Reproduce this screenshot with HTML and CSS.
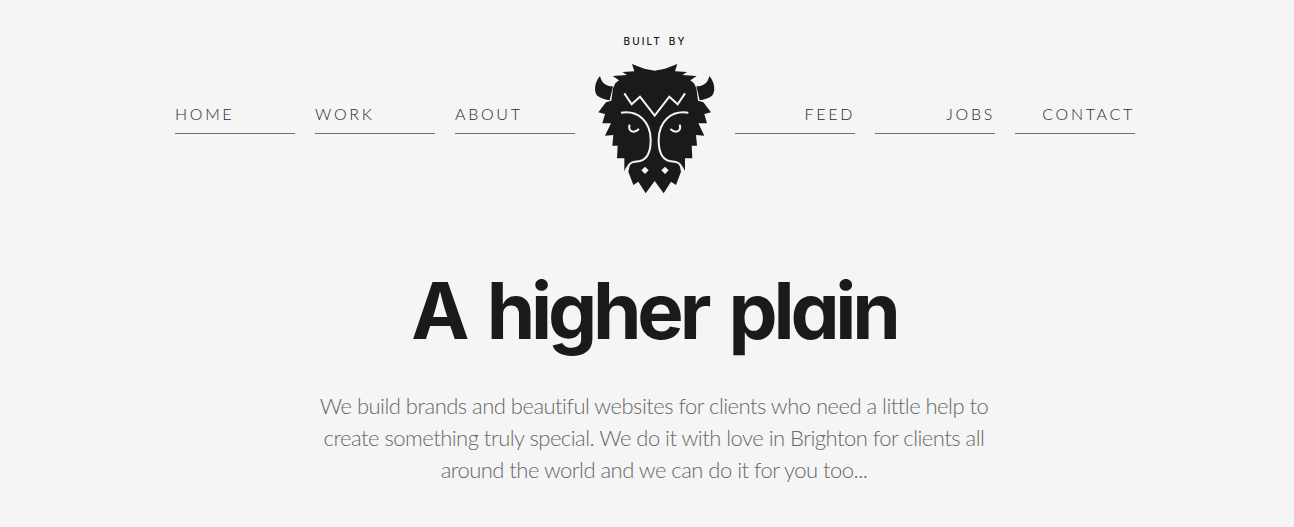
FILE: index.html
```html
<!DOCTYPE html>
<html lang="en">
<head>
<meta charset="utf-8">
<title>A higher plain</title>
<link rel="stylesheet" href="styles.css">
</head>
<body>
<header class="site-header">
  <nav class="nav-group">
    <a class="nav-link" href="#">HOME</a>
    <a class="nav-link" href="#">WORK</a>
    <a class="nav-link" href="#">ABOUT</a>
  </nav>
  <div class="brand">
    <div class="built-by">BUILT BY</div>
    <svg class="bison" viewBox="0 0 420 525" aria-label="Bison logo">
      <path class="bison-fill" d="M141 117 L178 131 L209 137 L240 131 L277 117 L270 139 L306 141 L292 150 L335 153 L316 166 L327 175 L334 190 L339 227 L355 232 L378 262 L358 267 L366 295 L340 295 L358 332 L333 330 L336 362 L320 362 L322 400 L300 400 L300 445 L283 418 L288 440 L273 480 L258 470 L236 505 L209 468 L182 505 L160 470 L145 480 L130 440 L135 418 L118 445 L118 400 L96 400 L98 362 L82 362 L85 330 L60 332 L78 295 L52 295 L60 267 L40 262 L63 232 L79 227 L84 190 L91 175 L102 166 L83 153 L126 150 L112 141 L148 139 Z"/>
      <path class="bison-fill" d="M45 153 C28 172 26 200 37 212 C47 220 62 224 74 226 L84 184 C68 184 50 178 45 153 Z"/>
      <path class="bison-fill" d="M373 153 C390 172 392 200 381 212 C371 220 356 224 344 226 L334 184 C350 184 368 178 373 153 Z"/>
      <path class="bison-line" d="M118 205 L140 238 L165 215 L209 272 L253 215 L278 238 L300 205"/>
      <path class="bison-line" d="M108 263 C160 255 197 290 197 345 C197 385 185 403 165 408 L145 411 Q132 412 118 445"/>
      <path class="bison-line" d="M310 263 C258 255 221 290 221 345 C221 385 233 403 253 408 L273 411 Q286 412 300 445"/>
      <path class="bison-line" d="M134 299 C128 318 145 328 162 312"/>
      <path class="bison-line" d="M284 299 C290 318 273 328 256 312"/>
      <path class="bison-mark" d="M180 425 L191 436 L180 447 L169 436 Z"/>
      <path class="bison-mark" d="M240 425 L251 436 L240 447 L229 436 Z"/>
    </svg>
  </div>
  <nav class="nav-group nav-group-right">
    <a class="nav-link" href="#">FEED</a>
    <a class="nav-link" href="#">JOBS</a>
    <a class="nav-link" href="#">CONTACT</a>
  </nav>
</header>
<main class="hero">
  <h1 class="hero-title">A higher plain</h1>
  <p class="hero-copy">We build brands and beautiful websites for clients who need a little help to create something truly special. We do it with love in Brighton for clients all around the world and we can do it for you too...</p>
</main>
</body>
</html>
```
FILE: styles.css
```css
* { box-sizing: border-box; }
html, body { margin: 0; }
body {
  background: #f5f5f5;
  color: #1a1a1a;
  font-family: "Lato", "Liberation Sans", sans-serif;
  height: 527px;
  overflow: hidden;
}
.site-header {
  width: 960px;
  margin: 0 0 0 175px;
  padding-top: 34px;
  display: flex;
  align-items: flex-start;
}
.nav-group {
  display: flex;
  gap: 20px;
  padding-top: 70px;
}
.nav-link {
  display: block;
  width: 120px;
  height: 30px;
  border-bottom: 1px solid #6f6f6f;
  color: #2a2a2a;
  font-size: 16px;
  font-weight: 300;
  letter-spacing: 2.7px;
  line-height: 20px;
  text-decoration: none;
}
.nav-group-right .nav-link { text-align: right; }
.brand {
  width: 160px;
  display: flex;
  flex-direction: column;
  align-items: center;
}
.built-by {
  font-family: "Inter", sans-serif;
  font-size: 10px;
  font-weight: 500;
  letter-spacing: 2.1px;
  word-spacing: 2px;
  line-height: 14px;
}
.bison {
  display: block;
  width: 140px;
  height: 175px;
  margin-top: -23px;
}
.bison-fill { fill: #1a1a1a; }
.bison-mark { fill: #f5f5f5; }
.bison-line {
  fill: none;
  stroke: #f5f5f5;
  stroke-width: 6;
}
.hero {
  text-align: center;
  padding-left: 14px;
}
.hero-title {
  margin: 63px 0 0;
  font-family: "Inter", sans-serif;
  font-feature-settings: "cv11";
  font-size: 78px;
  font-weight: 700;
  line-height: 96px;
  letter-spacing: -4.2px;
  word-spacing: 7px;
}
.hero-copy {
  width: 690px;
  margin: 31px auto 0;
  color: #686868;
  font-size: 22px;
  font-weight: 300;
  line-height: 32px;
  letter-spacing: -0.52px;
}
```
